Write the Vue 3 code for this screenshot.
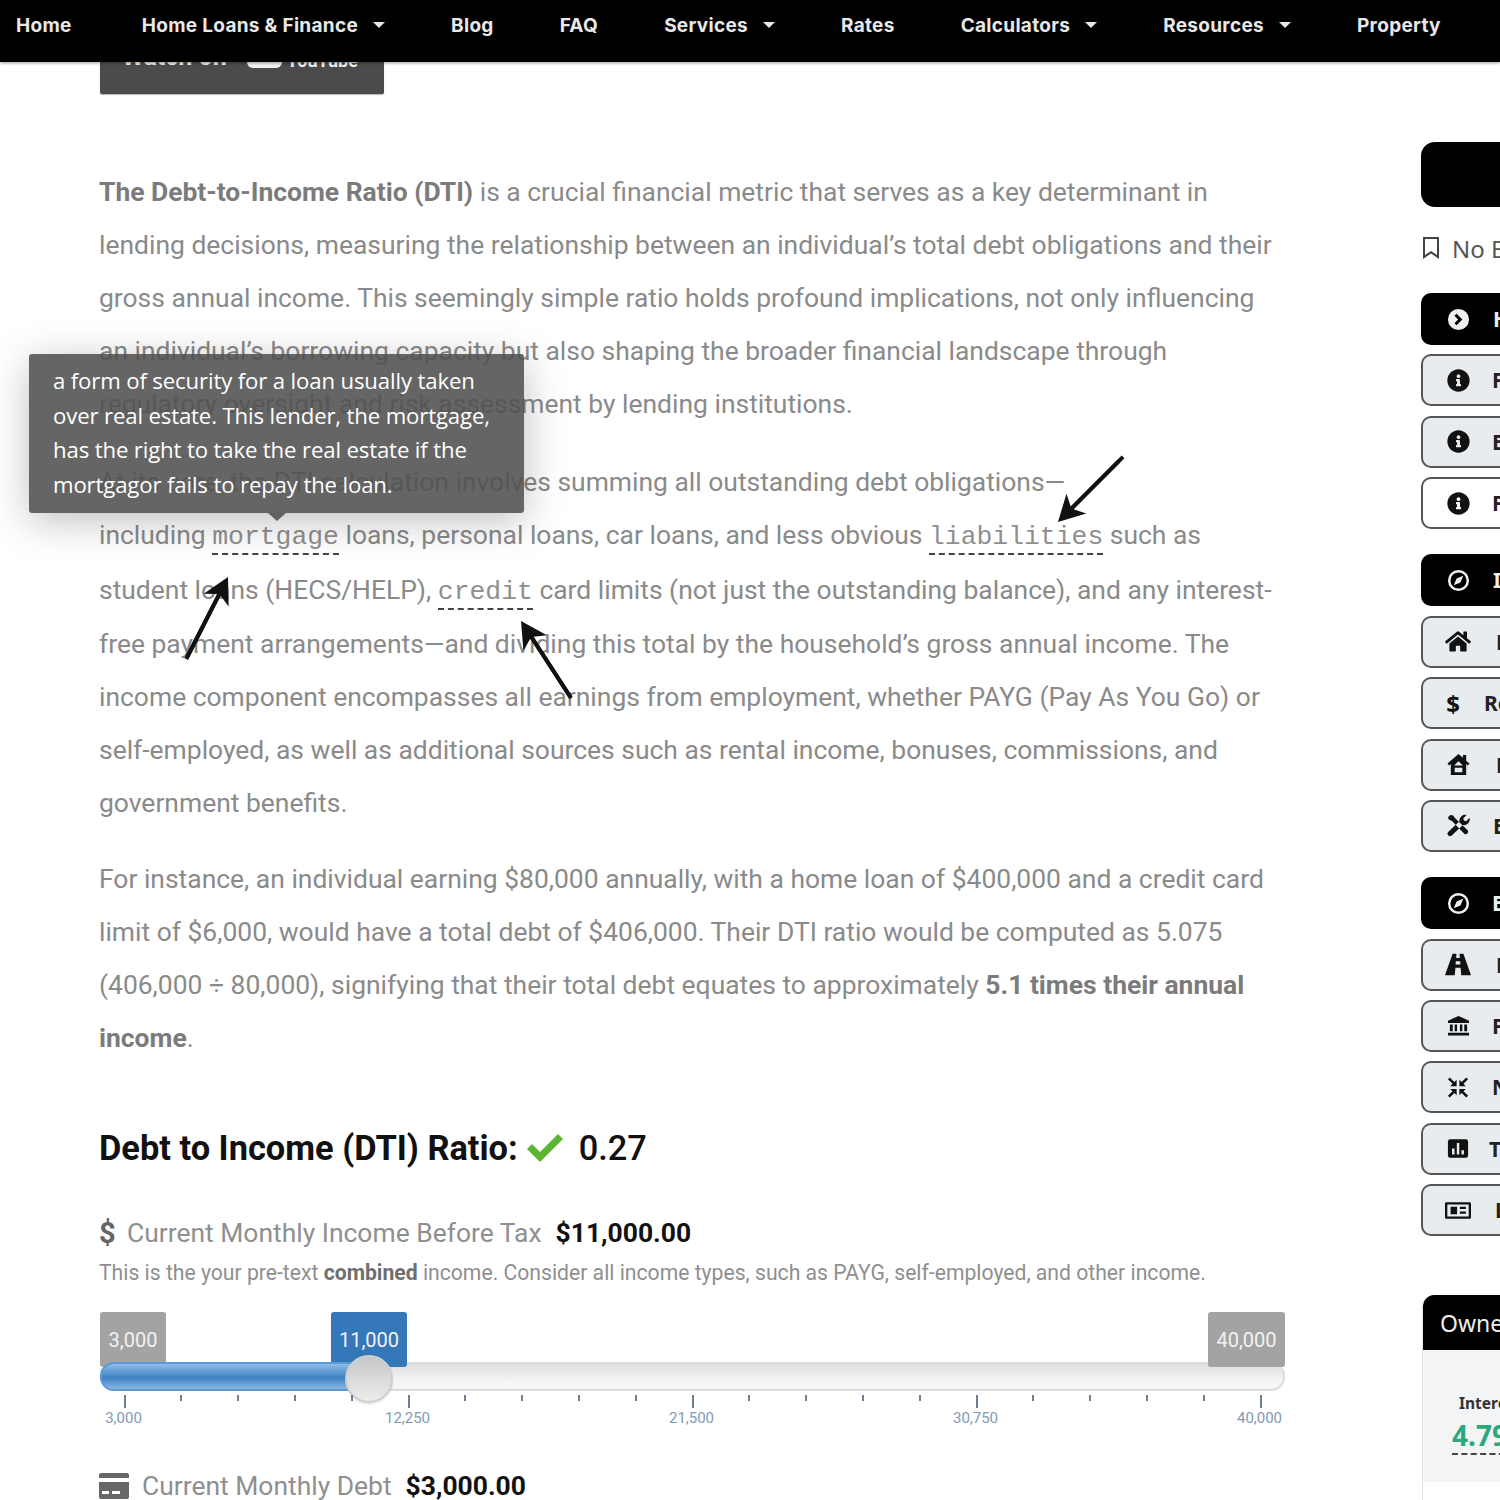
<template>
  <div class="page">
    <nav class="topnav">
      <a v-for="link in navLinks" :key="link.label" class="nav-link">
        {{ link.label }}
        <span v-if="link.menu" class="caret"></span>
      </a>
    </nav>

    <div class="layout">
      <main class="content">
        <div class="watch-btn">
          <span>Watch on</span>
          <span class="yt-logo"></span>
          <span class="yt-name">YouTube</span>
        </div>

        <p class="first">
          <strong>The Debt-to-Income Ratio (DTI)</strong> is a crucial financial metric that serves as a key determinant in lending decisions, measuring the relationship between an individual’s total debt obligations and their gross annual income. This seemingly simple ratio holds profound implications, not only influencing an individual’s borrowing capacity but also shaping the broader financial landscape through regulatory oversight and risk assessment by lending institutions.
        </p>
        <p>
          At its core, the DTI calculation involves summing all outstanding debt obligations—<br>including <span class="term">mortgage</span> loans, personal loans, car loans, and less obvious <span class="term">liabilities</span> such as student loans (HECS/HELP), <span class="term">credit</span> card limits (not just the outstanding balance), and any interest-free payment arrangements—and dividing this total by the household’s gross annual income. The income component encompasses all earnings from employment, whether PAYG (Pay As You Go) or self-employed, as well as additional sources such as rental income, bonuses, commissions, and government benefits.
        </p>
        <p class="last">
          For instance, an individual earning $80,000 annually, with a home loan of $400,000 and a credit card limit of $6,000, would have a total debt of $406,000. Their DTI ratio would be computed as 5.075 (406,000 ÷ 80,000), signifying that their total debt equates to approximately <strong>5.1 times their annual income</strong>.
        </p>

        <div class="tooltip">
          a form of security for a loan usually taken over real estate. This lender, the mortgage, has the right to take the real estate if the mortgagor fails to repay the loan.
        </div>

        <h2 class="ratio">
          <span>Debt to Income (DTI) Ratio:</span>
          <svg class="check" viewBox="0 0 36 28"><path d="M0 15l5-5 8 8L31 0l5 5-23 23z" /></svg>
          <span class="ratio-val">0.27</span>
        </h2>

        <div class="field-label">
          <span class="dollar">$</span>
          <span>Current Monthly Income Before Tax</span>
          <b>$11,000.00</b>
        </div>
        <div class="hint">This is the your pre-text <strong>combined</strong> income. Consider all income types, such as PAYG, self-employed, and other income.</div>

        <div class="slider">
          <div class="track"></div>
          <span class="bubble bubble-min">3,000</span>
          <span class="bubble bubble-now">11,000</span>
          <span class="bubble bubble-max">40,000</span>
          <div class="fill"></div>
          <div class="handle"></div>
          <span
            v-for="tick in ticks"
            :key="tick.x"
            class="tick"
            :class="{ major: tick.label }"
            :style="{ left: tick.x + 'px' }"
          ></span>
          <span
            v-for="tick in ticks.filter(t => t.label)"
            :key="tick.label"
            class="tick-label"
            :style="{ left: tick.x + 'px' }"
          >{{ tick.label }}</span>
        </div>

        <div class="field-label debt">
          <svg class="card-icon" viewBox="0 0 30 26"><path fill-rule="evenodd" d="M2 0h26a2 2 0 0 1 2 2v3H0V2a2 2 0 0 1 2-2z M0 9h30v15a2 2 0 0 1-2 2H2a2 2 0 0 1-2-2z M3 18v3h7v-3z M13 18v3h8v-3z" /></svg>
          <span>Current Monthly Debt</span>
          <b>$3,000.00</b>
        </div>
      </main>

      <aside class="sidebar">
        <div class="black-block"></div>
        <div class="bookmark">
          <svg viewBox="0 0 24 24"><path fill-rule="evenodd" d="M4 1h16v22l-8-5.5L4 23z M6 3v16l6-4 6 4V3z" /></svg>
          <span>No Bookmarks</span>
        </div>

        <div v-for="(group, i) in menuGroups" :key="i" class="menu-group">
          <a
            v-for="item in group"
            :key="item.label"
            class="menu-btn"
            :class="item.kind"
          >
            <span class="menu-icon">
              <span v-if="item.icon === 'dollar'" class="menu-dollar">$</span>
              <svg v-else :viewBox="icons[item.icon].box || '0 0 24 24'" :class="item.icon">
                <path fill-rule="evenodd" :d="icons[item.icon].d" />
              </svg>
            </span>
            <span class="menu-text" :style="{ marginLeft: item.gap + 'px' }">{{ item.label }}</span>
          </a>
        </div>

        <div class="rate-card">
          <div class="rate-head">Owner Occupied</div>
          <div class="rate-body">
            <div class="rate-name">Interest Rate</div>
            <div class="rate-val">4.79%</div>
          </div>
          <div class="rate-foot"></div>
        </div>
      </aside>
    </div>

    <!-- hand drawn arrows on top of the screenshot -->
    <svg class="arrows" viewBox="0 0 1500 1500">
      <g v-for="a in arrows" :key="a.id" :transform="`translate(${a.x} ${a.y}) rotate(${a.r})`">
        <path d="M0 0L-26 -14 -20 -2 -92 -2 -92 2 -20 2 -26 14z" />
        <rect :x="-a.len" y="-2" :width="a.len - 20" height="4" />
      </g>
    </svg>
  </div>
</template>

<script setup>
const navLinks = [
  { label: 'Home' },
  { label: 'Home Loans & Finance', menu: true },
  { label: 'Blog' },
  { label: 'FAQ' },
  { label: 'Services', menu: true },
  { label: 'Rates' },
  { label: 'Calculators', menu: true },
  { label: 'Resources', menu: true },
  { label: 'Property' }
]

const icons = {
  chevron: { d: 'M12 1a11 11 0 1 0 0 22 11 11 0 0 0 0-22z M10 6l6 6-6 6-2.2-2.2 3.8-3.8-3.8-3.8z' },
  info: {
    box: '0 0 512 512',
    d: 'M256 8C119.043 8 8 119.083 8 256c0 136.997 111.043 248 248 248s248-111.003 248-248C504 119.083 392.957 8 256 8zm0 110c23.196 0 42 18.804 42 42s-18.804 42-42 42-42-18.804-42-42 18.804-42 42-42zm56 254c0 6.627-5.373 12-12 12h-88c-6.627 0-12-5.373-12-12v-24c0-6.627 5.373-12 12-12h12v-64h-12c-6.627 0-12-5.373-12-12v-24c0-6.627 5.373-12 12-12h64c6.627 0 12 5.373 12 12v100h12c6.627 0 12 5.373 12 12v24z'
  },
  compass: { d: 'M12 1a11 11 0 1 0 0 22 11 11 0 0 0 0-22z M12 3.6a8.4 8.4 0 1 1 0 16.8 8.4 8.4 0 0 1 0-16.8z M17 7l-3 7-7 3 3-7z' },
  home: {
    box: '0 0 576 512',
    d: 'M280.37 148.26L96 300.11V464a16 16 0 0 0 16 16l112.06-.29a16 16 0 0 0 15.92-16V368a16 16 0 0 1 16-16h64a16 16 0 0 1 16 16v95.64a16 16 0 0 0 16 16.05L464 480a16 16 0 0 0 16-16V300L295.67 148.26a12.19 12.19 0 0 0-15.3 0zM571.6 251.47L488 182.56V44.05a12 12 0 0 0-12-12h-56a12 12 0 0 0-12 12v72.61L318.47 43a48 48 0 0 0-61 0L4.34 251.47a12 12 0 0 0-1.6 16.9l25.5 31A12 12 0 0 0 45.15 301l235.22-193.74a12.19 12.19 0 0 1 15.3 0L530.9 301a12 12 0 0 0 16.9-1.6l25.5-31a12 12 0 0 0-1.7-16.93z'
  },
  damage: { d: 'M12 1L0.5 11l1.8 2L4 11.6V23h16V11.6l1.7 1.4 1.8-2L20 8V2h-3.4v3z M12 8.5L7.5 13h9z M8 15.5v4.5h8v-4.5z' },
  tools: { d: 'M3.5 1L1 3.5l1 2.5 3 1 13 13.5a2.5 2.5 0 0 0 3.5-3.5L8 4 6.5 1.5z M1.5 18.5L13 7.5A6 6 0 0 1 20.5 1L17 4.5l.7 2.3 2.3.7 3.5-3.5a6 6 0 0 1-7 7.5L5 22.5a2.6 2.6 0 0 1-3.5-4z' },
  road: { box: '0 0 24 20', d: 'M7 0h3.6l-.3 4h3.4L13.4 0H17l7 20h-9l-.6-7H9.6L9 20H0z M10 7l-.2 3h4.4L14 7z' },
  bank: { d: 'M12 2L23 7v2.5H1V7z M3 11h3v7H3z M8 11h2.5v7H8z M13.5 11H16v7h-2.5z M18 11h3v7h-3z M1 19.5h22V22.5H1z' },
  compress: { d: 'M1 3l2-2 5 5 2.5-2.5V10.5H3.5L6 8z M23 3l-2-2-5 5-2.5-2.5V10.5h7L18 8z M1 21l2 2 5-5 2.5 2.5V13.5H3.5L6 16z M23 21l-2 2-5-5-2.5 2.5V13.5h7L18 16z' },
  poll: { d: 'M3.5 2h17A2.5 2.5 0 0 1 23 4.5v15a2.5 2.5 0 0 1-2.5 2.5h-17A2.5 2.5 0 0 1 1 19.5v-15A2.5 2.5 0 0 1 3.5 2z M5.5 12v6.5h2.7V12z M10.7 6v12.5h2.7V6z M15.8 14v4.5h2.7V14z' },
  idcard: { box: '0 0 28 18', d: 'M1.5 0h25A1.5 1.5 0 0 1 28 1.5v15a1.5 1.5 0 0 1-1.5 1.5h-25A1.5 1.5 0 0 1 0 16.5v-15A1.5 1.5 0 0 1 1.5 0z M2.5 2.5v13h23v-13z M6 5h7v8H6z M16 5h6.5v2.5H16z M16 10h6.5v2.5H16z' }
}

const menuGroups = [
  [
    { label: 'Home Loan Guide', icon: 'chevron', kind: 'dark', gap: 21 },
    { label: 'First Home Buyers', icon: 'info', kind: 'grey', gap: 20 },
    { label: 'Existing Owners', icon: 'info', kind: 'grey', gap: 20 },
    { label: 'Finance Basics', icon: 'info', kind: 'white', gap: 20 }
  ],
  [
    { label: 'Investing', icon: 'compass', kind: 'dark', gap: 21 },
    { label: 'Loan Types', icon: 'home', kind: 'grey', gap: 24 },
    { label: 'Refinance', icon: 'dollar', kind: 'grey', gap: 12 },
    { label: 'Low Deposit', icon: 'damage', kind: 'grey', gap: 24 },
    { label: 'Equity Tools', icon: 'tools', kind: 'grey', gap: 21 }
  ],
  [
    { label: 'Explore', icon: 'compass', kind: 'dark', gap: 20 },
    { label: 'Lenders', icon: 'road', kind: 'grey', gap: 24 },
    { label: 'Fixed Rates', icon: 'bank', kind: 'grey', gap: 20 },
    { label: 'Negative Gearing', icon: 'compress', kind: 'grey', gap: 20 },
    { label: 'Tax Returns', icon: 'poll', kind: 'grey', gap: 17 },
    { label: 'Living Costs', icon: 'idcard', kind: 'grey', gap: 23 }
  ]
]

const labels = { 0: '3,000', 5: '12,250', 10: '21,500', 15: '30,750', 20: '40,000' }
const ticks = Array.from({ length: 21 }, (_, i) => ({
  x: 24.5 + i * 56.8,
  label: labels[i]
}))

const arrows = [
  { id: 'a', x: 1058, y: 522, r: 135, len: 86 },
  { id: 'b', x: 228, y: 577, r: -63, len: 90 },
  { id: 'c', x: 521, y: 621, r: -123, len: 90 }
]
</script>

<style>
html,
body {
  margin: 0;
  background: #fff;
  overflow: hidden;
}
</style>

<style scoped>
.page {
  position: relative;
  width: 1500px;
  height: 1500px;
  overflow: hidden;
  background: #fff;
  font-family: Roboto, "Liberation Sans", sans-serif;
  color: #8a8a8a;
}

.topnav {
  position: relative;
  z-index: 3;
  display: flex;
  align-items: center;
  gap: 66px;
  height: 62px;
  padding: 0 0 12px 16px;
  box-sizing: border-box;
  background: #000;
  box-shadow: 0 1px 3px rgba(0, 0, 0, 0.4);
  font-family: Inter, "Open Sans", sans-serif;
  font-weight: 700;
  font-size: 19px;
  letter-spacing: 0.3px;
  color: #e8e8e8;
  white-space: nowrap;
}
.nav-link {
  display: flex;
  align-items: center;
}
.nav-link:first-child {
  margin-right: 4px;
}
.caret {
  width: 0;
  height: 0;
  margin-left: 15px;
  border-left: 6px solid transparent;
  border-right: 6px solid transparent;
  border-top: 6px solid #e8e8e8;
}

.layout {
  display: flex;
  padding-left: 99px;
}
.content {
  position: relative;
  flex: none;
  width: 1186px;
}

.watch-btn {
  display: flex;
  align-items: center;
  box-sizing: border-box;
  width: 284px;
  height: 64px;
  margin: -32px 0 0 1px;
  padding: 0 0 12px 22px;
  background: #4b4b4b;
  border-radius: 0 0 2px 2px;
  box-shadow: 0 1px 1px rgba(0, 0, 0, 0.3);
  color: #f2f2f2;
  font-weight: 700;
  font-size: 25px;
  white-space: nowrap;
}
.yt-logo {
  width: 35px;
  height: 24px;
  margin-left: 20px;
  border-radius: 6px;
  background: #f2f2f2;
}
.yt-name {
  margin: 8px 0 0 5px;
  font-size: 18px;
}

p {
  margin: 25px 0 0;
  font-size: 26.45px;
  line-height: 53px;
}
p.first {
  margin-top: 71px;
}
p.last {
  margin-top: 23px;
}
p strong {
  font-weight: 700;
  color: #7b7b7b;
}
.term {
  font-family: "Liberation Mono", monospace;
  font-size: 26.4px;
  line-height: 50.5px;
  color: #8f8f8f;
  border-bottom: 2px dashed #444;
  padding-bottom: 1px;
}

.tooltip {
  position: absolute;
  left: -70px;
  top: 292px;
  box-sizing: border-box;
  width: 495px;
  height: 159px;
  padding: 10px 24px;
  border-radius: 3px;
  background: rgba(80, 80, 80, 0.88);
  box-shadow: 0 8px 40px rgba(0, 0, 0, 0.25);
  color: #fff;
  font-family: "Open Sans", sans-serif;
  font-size: 22.2px;
  line-height: 34.6px;
  letter-spacing: -0.15px;
}
.tooltip::after {
  content: "";
  position: absolute;
  left: 239px;
  bottom: -8px;
  border-left: 9px solid transparent;
  border-right: 9px solid transparent;
  border-top: 8px solid #606060;
}

.ratio {
  display: flex;
  align-items: center;
  margin: 62px 0 0;
  font-size: 34.4px;
  line-height: 44px;
  font-weight: 700;
  color: #111;
  white-space: nowrap;
}
.check {
  width: 36px;
  height: 28px;
  margin-left: 9px;
  fill: #5cb531;
}
.ratio-val {
  margin-left: 16px;
  font-weight: 500;
}

.field-label {
  display: flex;
  align-items: center;
  margin-top: 45px;
  font-size: 26.45px;
  line-height: 36px;
  color: #8f8f8f;
}
.field-label b {
  margin-left: 14px;
  color: #111;
  font-weight: 700;
}
.dollar {
  width: 28px;
  font-weight: 700;
  font-size: 29px;
  color: #666;
}
.hint {
  margin-top: 8px;
  font-size: 21.17px;
  line-height: 28px;
  color: #8f8f8f;
  white-space: nowrap;
}
.hint strong {
  color: #6f6f6f;
}

.slider {
  position: relative;
  height: 125px;
  margin-top: 25px;
}
.track {
  position: absolute;
  left: 1px;
  top: 50px;
  width: 1185px;
  height: 29px;
  box-sizing: border-box;
  border: 2px solid #dcdcdc;
  border-radius: 14px;
  background: linear-gradient(#dedede, #f6f6f6 70%);
}
.fill {
  position: absolute;
  left: 1px;
  top: 50px;
  width: 272px;
  height: 29px;
  box-sizing: border-box;
  border: 2px solid #5a9ad6;
  border-radius: 14px 0 0 14px;
  background: linear-gradient(#8fbde8, #3d83c6 55%, #8cb8e2);
}
.bubble {
  position: absolute;
  top: 0;
  display: flex;
  align-items: center;
  justify-content: center;
  height: 55px;
  border-radius: 3px;
  font-size: 20px;
  color: #f2f2f2;
  background: #a3a3a3;
}
.bubble-min {
  left: 1px;
  width: 66px;
}
.bubble-now {
  left: 232px;
  width: 76px;
  background: #3578ba;
}
.bubble-max {
  left: 1109px;
  width: 77px;
}
.handle {
  position: absolute;
  left: 246px;
  top: 43px;
  width: 48px;
  height: 48px;
  box-sizing: border-box;
  border-radius: 50%;
  border: 2px solid #cfcfcf;
  background: linear-gradient(#c6c7c9, #ececec);
  box-shadow: 0 1px 2px rgba(0, 0, 0, 0.15);
}
.tick {
  position: absolute;
  top: 83px;
  width: 2px;
  height: 6px;
  background: #6f7f8f;
}
.tick.major {
  height: 13px;
}
.tick-label {
  position: absolute;
  top: 97px;
  transform: translateX(-50%);
  font-size: 15px;
  line-height: 18px;
  color: #7e9ab8;
}
.debt {
  margin-top: 31px;
}
.card-icon {
  width: 30px;
  height: 26px;
  margin-right: 13px;
  fill: #666;
}

.sidebar {
  flex: none;
  width: 300px;
  margin-left: 136px;
  padding-top: 80px;
}
.black-block {
  height: 65px;
  border-radius: 14px 0 0 14px;
  background: #000;
}
.bookmark {
  display: flex;
  align-items: center;
  height: 34px;
  margin: 24px 0 28px -2px;
  font-family: "Noto Sans", sans-serif;
  font-size: 24px;
  color: #555;
  white-space: nowrap;
}
.bookmark svg {
  width: 24px;
  height: 26px;
  margin-right: 9px;
  fill: #444;
}
.menu-group {
  display: flex;
  flex-direction: column;
  gap: 9.4px;
  margin-bottom: 25.2px;
}
.menu-btn {
  display: flex;
  align-items: center;
  box-sizing: border-box;
  height: 52px;
  padding-left: 21px;
  border: 2px solid #555;
  border-right: 0;
  border-radius: 10px 0 0 10px;
  font-family: "Noto Sans", sans-serif;
  font-weight: 700;
  font-size: 21px;
  color: #222;
  white-space: nowrap;
}
.menu-btn.grey {
  background: #e8ecef;
}
.menu-btn.white {
  background: #fff;
}
.menu-btn.dark {
  background: #000;
  border-color: #000;
  color: #f0f0f0;
}
.menu-icon {
  display: flex;
  align-items: center;
  justify-content: center;
  width: 28px;
  height: 28px;
  flex: none;
}
.menu-icon svg {
  width: 23px;
  height: 23px;
  fill: #111;
}
.menu-icon svg.home,
.menu-icon svg.road,
.menu-icon svg.idcard {
  width: 26px;
}
.menu-icon svg.compress,
.menu-icon svg.poll {
  width: 22px;
}
.dark .menu-icon svg {
  fill: #f0f0f0;
}
.menu-dollar {
  margin-left: -10px;
  font-family: "Noto Sans", sans-serif;
  font-weight: 700;
  font-size: 24px;
  color: #111;
}
.rate-card {
  margin: 59px 0 0 1px;
  border-left: 1px solid #e4e4e4;
  border-radius: 12px 0 0 0;
  overflow: hidden;
}
.rate-head {
  height: 55px;
  padding-left: 17px;
  background: #000;
  color: #ededed;
  font-family: "Noto Sans", sans-serif;
  font-size: 23px;
  line-height: 57px;
  white-space: nowrap;
}
.rate-body {
  height: 132px;
  padding: 42px 0 0 29px;
  box-sizing: border-box;
  background: #f3f4f5;
  font-family: "Noto Sans", sans-serif;
}
.rate-name {
  margin-left: 7px;
  font-size: 15.5px;
  font-weight: 700;
  line-height: 22px;
  color: #333;
  white-space: nowrap;
}
.rate-val {
  display: inline-block;
  margin-top: 3px;
  font-size: 28px;
  font-weight: 700;
  line-height: 36px;
  color: #2ca87f;
  border-bottom: 2px dashed #444;
}
.rate-foot {
  height: 30px;
}

.arrows {
  position: absolute;
  left: 0;
  top: 0;
  z-index: 2;
  width: 1500px;
  height: 1500px;
  pointer-events: none;
  fill: #111;
}
</style>
